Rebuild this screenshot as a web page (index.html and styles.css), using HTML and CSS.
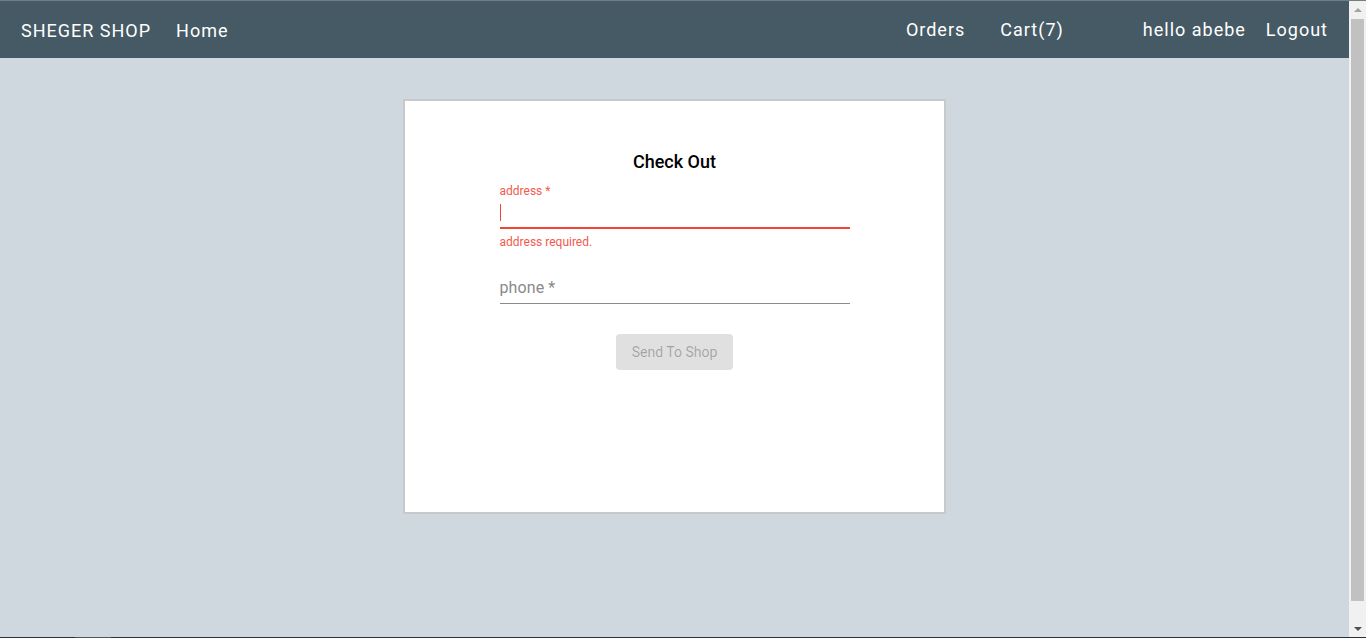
FILE: index.html
```html
<!DOCTYPE html>
<html>
<head>
<meta charset="utf-8">
<title>Sheger Shop</title>
<link rel="stylesheet" href="styles.css">
</head>
<body>
<div class="edge-top"></div>
<div class="frame">
  <div class="viewport">
    <header class="navbar">
      <div class="nav-left">
        <span class="brand">SHEGER SHOP</span>
        <span class="nav-link">Home</span>
      </div>
      <div class="nav-right">
        <span class="nav-link orders">Orders</span>
        <span class="nav-link cart">Cart(7)</span>
        <span class="nav-link hello">hello abebe</span>
        <span class="nav-link">Logout</span>
      </div>
    </header>
    <main class="page">
      <section class="card">
        <h2 class="title">Check Out</h2>
        <form class="form">
          <div class="field field-error">
            <label class="field-label">address *</label>
            <div class="field-input"><span class="caret"></span></div>
            <div class="field-hint">address required.</div>
          </div>
          <div class="field field-plain">
            <div class="field-input placeholder">phone *</div>
          </div>
          <div class="actions">
            <button type="button" class="btn-disabled" disabled>Send To Shop</button>
          </div>
        </form>
      </section>
    </main>
  </div>
  <div class="scrollbar">
    <div class="sb-arrow sb-up"></div>
    <div class="sb-track"><div class="sb-thumb"></div></div>
    <div class="sb-arrow sb-down"></div>
  </div>
</div>
<div class="edge-bottom"><span class="edge-mark"></span></div>
</body>
</html>
```

FILE: styles.css
```css
* { box-sizing: border-box; }
html, body {
  margin: 0;
  padding: 0;
  height: 638px;
  overflow: hidden;
}
body {
  background: #cfd8df;
  font-family: Roboto, "Liberation Sans", sans-serif;
  display: flex;
  flex-direction: column;
}
.edge-top {
  height: 1px;
  background: #6f7f88;
  flex: none;
}
.edge-bottom {
  height: 1px;
  background: #263238;
  flex: none;
  display: flex;
}
.edge-mark {
  margin-left: 75px;
  width: 36px;
  background: #4a555c;
}
.frame {
  flex: 1;
  display: flex;
  min-height: 0;
}
.viewport {
  flex: 1;
  display: flex;
  flex-direction: column;
}
.navbar {
  height: 57px;
  flex: none;
  background: #455a64;
  display: flex;
  align-items: center;
  justify-content: space-between;
  padding: 0 21px 0 21px;
  color: #ffffff;
  font-size: 18px;
  letter-spacing: 1px;
}
.nav-left {
  display: flex;
  align-items: center;
  gap: 25px;
  padding-top: 1px;
}
.nav-right {
  display: flex;
  align-items: center;
}
.nav-link, .brand { white-space: nowrap; }
.orders { margin-right: 35px; }
.cart { margin-right: 79px; }
.hello { margin-right: 20px; }
.page {
  display: flex;
  justify-content: center;
  padding-top: 41px;
}
.card {
  width: 543px;
  height: 415px;
  background: #ffffff;
  border: 2px solid #c6cacc;
  padding-top: 50px;
  display: flex;
  flex-direction: column;
  align-items: center;
}
.title {
  margin: 0;
  font-size: 18px;
  font-weight: 500;
  color: #000;
  line-height: 22px;
}
.form {
  width: 350px;
  margin-top: 11px;
}
.field-label {
  display: block;
  font-size: 12px;
  line-height: 14px;
  color: #f4584d;
}
.field-error .field-input {
  height: 27px;
  border-bottom: 2px solid #f44336;
  margin-top: 4px;
  display: flex;
  align-items: flex-start;
  padding-top: 2px;
}
.caret {
  display: block;
  width: 1px;
  height: 17px;
  background: #f44336;
}
.field-hint {
  margin-top: 6px;
  font-size: 12px;
  line-height: 14px;
  color: #f4584d;
}
.field-plain {
  margin-top: 29px;
}
.field-plain .field-input {
  height: 26px;
  border-bottom: 1px solid #8a8a8a;
  font-size: 16px;
  line-height: 20px;
  color: #8a8a8a;
  letter-spacing: 0.1px;
}
.actions {
  display: flex;
  justify-content: center;
  margin-top: 30px;
}
.btn-disabled {
  width: 117px;
  height: 36px;
  border: none;
  border-radius: 4px;
  background: #e0e0e0;
  color: rgba(0, 0, 0, 0.28);
  font-family: Roboto, "Liberation Sans", sans-serif;
  font-size: 14px;
  padding: 0;
}
.scrollbar {
  width: 17px;
  flex: none;
  background: #f1f1f1;
  display: flex;
  flex-direction: column;
}
.sb-arrow {
  height: 17px;
  flex: none;
  display: flex;
  align-items: center;
  justify-content: center;
}
.sb-up::before {
  content: "";
  border-left: 4px solid transparent;
  border-right: 4px solid transparent;
  border-bottom: 4px solid #a3a3a3;
}
.sb-down::before {
  content: "";
  border-left: 4px solid transparent;
  border-right: 4px solid transparent;
  border-top: 4px solid #505050;
}
.sb-track {
  flex: 1;
  padding: 1px 2px 19px 2px;
  display: flex;
}
.sb-thumb {
  flex: 1;
  background: #c1c1c1;
}
```
